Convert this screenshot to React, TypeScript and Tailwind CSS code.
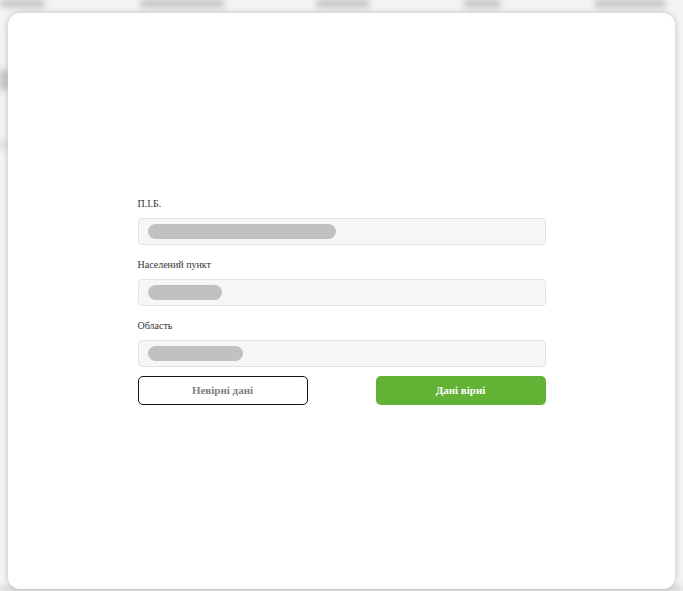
import React from "react";

const Field = ({ label, pill }: { label: string; pill: number }) => (
  <div className="flex flex-col">
    <div className="h-[12px] leading-[12px] text-[10px] text-[#333]">{label}</div>
    <div className="mt-[8px] h-[27px] rounded-[4px] border border-[#e2e2e2] bg-[#f6f6f6] flex items-center pl-[9px]">
      <div className="h-[15px] rounded-full bg-[#c1c1c1]" style={{ width: pill }} />
    </div>
  </div>
);

export default function App() {
  return (
    <div
      className="relative w-[683px] h-[591px] overflow-hidden bg-[#f4f4f4]"
      style={{ fontFamily: '"Liberation Serif", "DejaVu Serif", serif' }}
    >
      {/* blurred background page */}
      <div className="absolute inset-0 blur-[3px] pointer-events-none">
        <div className="absolute top-[0px] left-[0px] w-[45px] h-[7px] bg-[#bdbdbd] rounded" />
        <div className="absolute top-[0px] left-[140px] w-[85px] h-[7px] bg-[#bdbdbd] rounded" />
        <div className="absolute top-[0px] left-[316px] w-[54px] h-[7px] bg-[#bdbdbd] rounded" />
        <div className="absolute top-[0px] left-[463px] w-[38px] h-[7px] bg-[#bdbdbd] rounded" />
        <div className="absolute top-[0px] left-[594px] w-[72px] h-[7px] bg-[#bdbdbd] rounded" />
        <div className="absolute top-[70px] left-[0px] w-[8px] h-[20px] bg-[#bcbcbc]" />
        <div className="absolute top-[140px] left-[0px] w-[6px] h-[10px] bg-[#d8d8d8]" />
        <div className="absolute bottom-[0px] left-[0px] w-[683px] h-[4px] bg-[#c8c8c8]" />
      </div>
      <div className="relative pt-[13px] pl-[8px] pr-[8px] pb-[2px] h-full">
        <div className="h-full rounded-[12px] bg-white shadow-[0_0_6px_rgba(0,0,0,0.22)] flex items-center justify-center">
          <div className="w-[408px] flex flex-col">
            <div className="flex flex-col gap-[14px]">
              <Field label="П.І.Б." pill={188} />
              <Field label="Населений пункт" pill={74} />
              <Field label="Область" pill={95} />
            </div>
            <div className="mt-[9px] flex justify-between">
              <button className="w-[170px] h-[29px] rounded-[5px] border border-[#111] bg-white text-[11px] font-bold text-[#808080]">
                Невірні дані
              </button>
              <button className="w-[170px] h-[29px] rounded-[5px] bg-[#62b236] text-[11px] font-bold text-white">
                Дані вірні
              </button>
            </div>
          </div>
        </div>
      </div>
    </div>
  );
}
